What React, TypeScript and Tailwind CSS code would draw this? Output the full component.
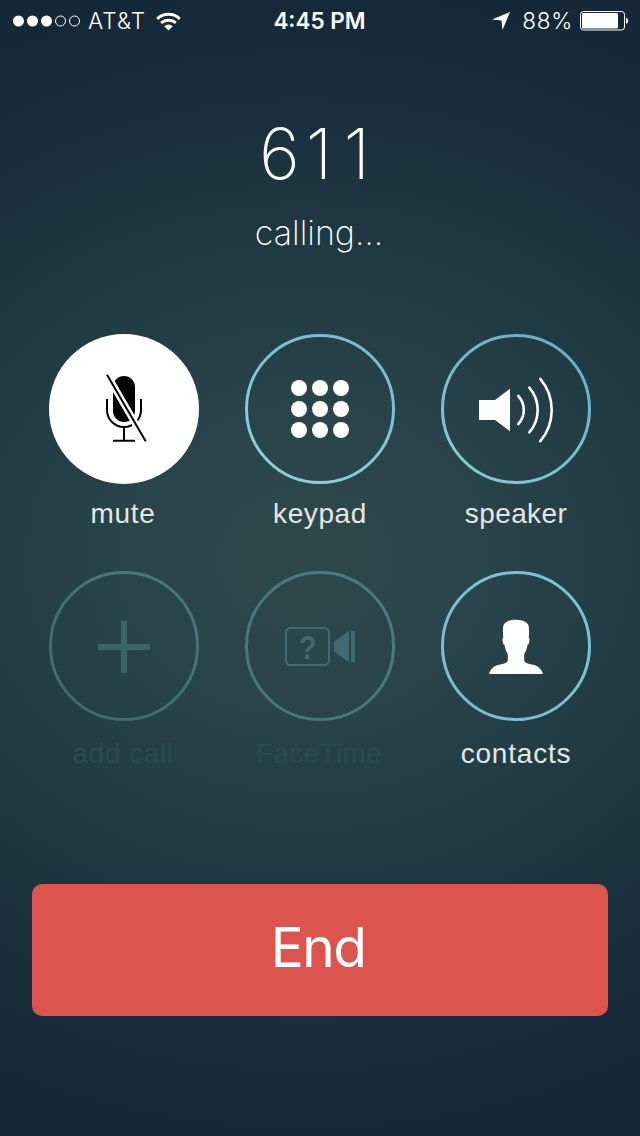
import type { ReactNode } from 'react';

type CallButtonProps = {
  id: string;
  label: string;
  from: string;
  to: string;
  filled?: boolean;
  disabled?: boolean;
  labelClass: string;
  children: ReactNode;
};

function CallButton({ id, label, from, to, filled, disabled, labelClass, children }: CallButtonProps) {
  return (
    <button disabled={disabled} className="flex w-[150px] flex-col items-center">
      <svg width="150" height="150" viewBox="0 0 150 150" fill="none">
        <defs>
          <linearGradient id={id} x1="0.8" y1="0" x2="0.2" y2="1">
            <stop offset="0" stopColor={from} />
            <stop offset="1" stopColor={to} />
          </linearGradient>
        </defs>
        {filled ? (
          <circle cx="75" cy="75" r="75" fill="#fff" />
        ) : (
          <circle cx="75" cy="75" r="73.5" stroke={`url(#${id})`} strokeWidth="3" />
        )}
        {children}
      </svg>
      <span className={`whitespace-nowrap text-[28px] leading-[40px] ${labelClass}`}>{label}</span>
    </button>
  );
}

function MuteIcon() {
  return (
    <g>
      <rect x="64" y="42" width="22" height="46" rx="11" fill="#000" />
      <path d="M58 65v11a17 17 0 0 0 34 0V65M75 93v14M64 106.7h22" stroke="#000" strokeWidth="2" />
      <path d="M58 40.7 96.7 107.3" stroke="#fff" strokeWidth="7" />
      <path d="M58 40.7 96.7 107.3" stroke="#000" strokeWidth="2" />
    </g>
  );
}

function KeypadIcon() {
  const steps = [54, 75, 96];
  return (
    <g fill="#fff">
      {steps.map((y) => steps.map((x) => <circle key={`${x}-${y}`} cx={x} cy={y} r="8" />))}
    </g>
  );
}

function SpeakerIcon() {
  return (
    <g>
      <path d="M38 66h16l15-11.3v42.6L54 86H38z" fill="#fff" />
      <path
        d="M77.3 62a20.6 20.6 0 0 1 0 28M88.3 53.7a33.8 33.8 0 0 1 0 44.6M99.3 44.8a48.4 48.4 0 0 1 0 62.4"
        stroke="#fff"
        strokeWidth="2.6"
        strokeLinecap="round"
      />
    </g>
  );
}

function FaceTimeIcon() {
  return (
    <g fill="#3f6b70">
      <rect x="41" y="57" width="43" height="37" rx="4.5" fill="none" stroke="#3f6b70" strokeWidth="2" />
      <text x="54" y="88" fontSize="33" fontWeight="700" textLength="17.5" lengthAdjust="spacingAndGlyphs">
        ?
      </text>
      <path d="M89 70.5 104 60v31L89 80.5zM106 60h4v31h-4z" />
    </g>
  );
}

function ContactIcon() {
  return (
    <path
      d="M75 48.8c5 0 9 1.300 11.900 4.200 1.500 2.600 1.300 8.500.8 13.600 1 .6.900 2.200.6 3.800-.3 2-.9 3.400-1.900 3.700-.5 3.400-1.300 6.500-3.200 8.900v7c1.500 2.500 5.300 3 9 3.800 5 1.100 8.300 4.200 9.800 9.200H48c1.500-5 4.800-8.100 9.800-9.200 3.700-.8 7.500-1.300 9-3.800v-7c-1.900-2.400-2.700-5.500-3.200-8.900-1-.3-1.600-1.700-1.900-3.700-.3-1.600-.4-3.200.6-3.800-.5-5.100-.7-11 .8-13.600 2.900-2.900 6.900-4.200 11.900-4.200z"
      fill="#fff"
    />
  );
}

function StatusBar() {
  return (
    <div className="grid h-10 grid-cols-3 items-center pl-[13px] pr-[11px] pt-px font-['Inter',sans-serif] text-[22.5px] leading-10">
      <div className="flex items-center">
        <svg width="68" height="12" viewBox="0 0 68 12" fill="#fff">
          <circle cx="5.500" cy="6" r="5.500" />
          <circle cx="19.500" cy="6" r="5.500" />
          <circle cx="33.500" cy="6" r="5.500" />
          <circle cx="47.500" cy="6" r="5" fill="none" stroke="#fff" />
          <circle cx="61.500" cy="6" r="5" fill="none" stroke="#fff" />
        </svg>
        <span className="ml-[7px] font-[350] tracking-[1.1px]">AT&amp;T</span>
        <svg className="ml-[10px]" width="25" height="19" viewBox="0 0 25 19" fill="none" stroke="#fff" strokeWidth="3">
          <path d="M1.200 6.800a16.500 16.500 0 0 1 22.600 0M5.200 11a10.800 10.800 0 0 1 14.600 0" />
          <path d="M8.200 14.200a6.500 6.500 0 0 1 8.600 0L12.500 18.500z" fill="#fff" stroke="none" />
        </svg>
      </div>
      <div className="pr-[3px] text-center font-semibold">4:45 PM</div>
      <div className="flex items-center justify-end">
        <svg width="18" height="18" viewBox="0 0 18 18" fill="#fff">
          <path d="M18 0 10.500 18 9.500 8.500 0 7.500z" />
        </svg>
        <span className="ml-[12px] font-[350] tracking-[0.7px]">88%</span>
        <svg className="ml-[7px]" width="49" height="20" viewBox="0 0 49 20">
          <rect x="0.500" y="0.500" width="44" height="18.500" rx="3" fill="none" stroke="#fff" />
          <rect x="2" y="2" width="36" height="15.500" rx="1" fill="#fff" />
          <path d="M46 6.500a3.500 3.500 0 0 1 0 6.500z" fill="#fff" />
        </svg>
      </div>
    </div>
  );
}

export default function App() {
  return (
    <main className="flex h-[1136px] w-[640px] flex-col overflow-hidden bg-[#152837] bg-[radial-gradient(ellipse_680px_570px_at_305px_560px,#2e484a_0%,#29444a_25%,#203b44_52%,#1a303e_76%,#152837_100%)] font-['Liberation_Sans',Arial,sans-serif] text-white">
      <StatusBar />
      <header className="mt-[74px] flex flex-col items-center font-['Inter',sans-serif]">
        <h1 className="text-[70px] font-extralight leading-[80px] tracking-[11px]">
          <span className="tracking-[6px]">6</span>11
        </h1>
        <p className="mt-[17px] pr-0.5 text-[34px] font-extralight leading-[44px]">calling…</p>
      </header>
      <section className="mt-[79px] grid grid-cols-3 gap-x-[46px] gap-y-[37px] px-[49px]">
        <CallButton id="mute" label="mute" from="#fff" to="#fff" filled labelClass="mt-[10px] pr-0.5 tracking-[0.7px] text-[#e3e7e8]">
          <MuteIcon />
        </CallButton>
        <CallButton id="keypad" label="keypad" from="#78b9d0" to="#8ed3d9" labelClass="mt-[10px] tracking-[0.6px] text-[#e3e7e8]">
          <KeypadIcon />
        </CallButton>
        <CallButton id="speaker" label="speaker" from="#6aaccc" to="#86cbd6" labelClass="mt-[10px] tracking-[0.4px] text-[#e3e7e8]">
          <SpeakerIcon />
        </CallButton>
        <CallButton id="add" label="add call" from="#4a777c" to="#40696f" disabled labelClass="mt-[13px] pr-0.5 tracking-[0.6px] text-[#2a4a52]">
          <path d="M72 50h6v23h23v6H78v23h-6V79H49v-6h23z" fill="#3a646b" />
        </CallButton>
        <CallButton id="facetime" label="FaceTime" from="#4d7a7f" to="#48757b" disabled labelClass="mt-[13px] pr-0.5 tracking-[0.3px] text-[#2a4a52]">
          <FaceTimeIcon />
        </CallButton>
        <CallButton id="contacts" label="contacts" from="#7dc2d4" to="#79bdd1" labelClass="mt-[13px] tracking-[0.8px] text-[#e3e7e8]">
          <ContactIcon />
        </CallButton>
      </section>
      <button className="mx-8 mt-[110px] h-[132px] rounded-[10px] bg-[#dc544e] pb-1.5 pr-1 font-['Inter',sans-serif] text-[55px] font-normal tracking-[-1.5px]">
        End
      </button>
    </main>
  );
}
